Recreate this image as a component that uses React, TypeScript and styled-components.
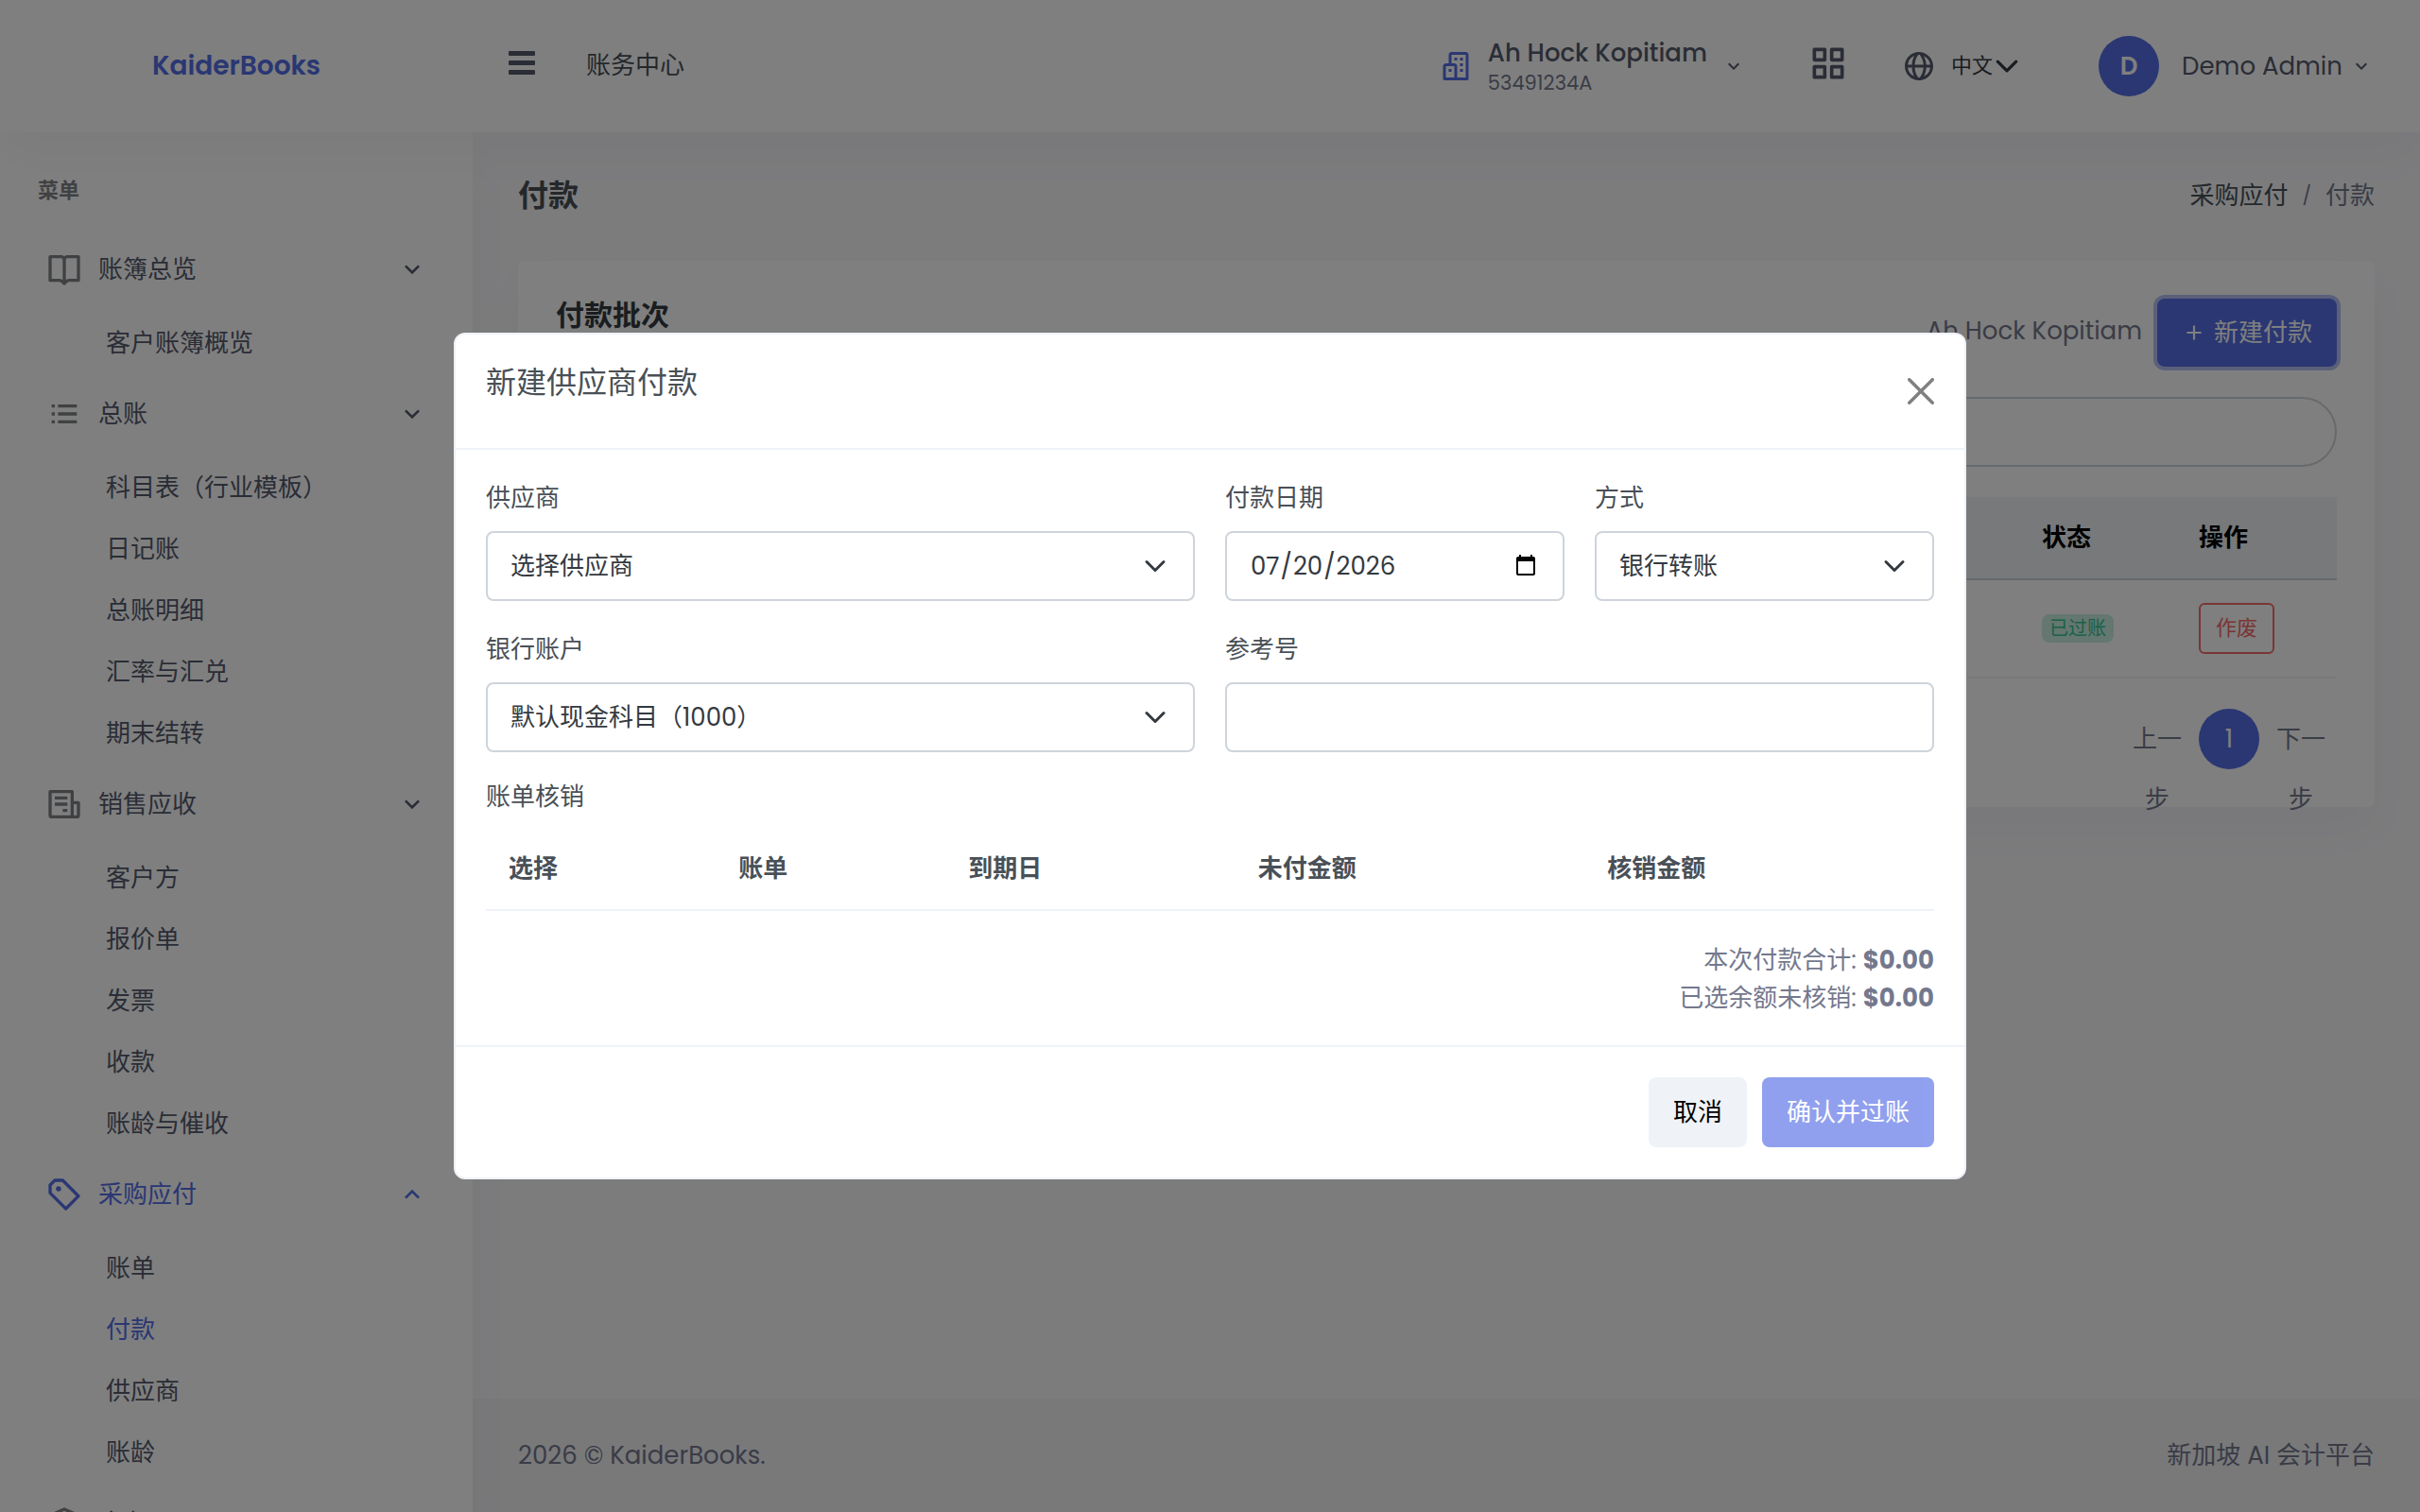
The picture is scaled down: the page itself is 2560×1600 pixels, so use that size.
import React from "react";
import styled, { createGlobalStyle, css } from "styled-components";
import {
  BiBookOpen,
  BiBuildings,
  BiCube,
  BiGlobe,
  BiGridAlt,
  BiListUl,
  BiPlus,
  BiPurchaseTagAlt,
} from "react-icons/bi";

const color = {
  primary: "#556ee6",
  text: "#495057",
  ink: "#343a40",
  nav: "#545a6d",
  heading: "#555b6d",
  muted: "#74788d",
  border: "#eff2f7",
  inputBorder: "#ced4da",
  body: "#f8f8fb",
};

const shadow = "0 24px 48px rgba(18, 38, 63, 0.03)";

const GlobalStyle = createGlobalStyle`
  *, *::before, *::after { box-sizing: border-box; }
  body {
    margin: 0;
    background: ${color.body};
    color: ${color.text};
    font-family: Poppins, Inter, "Noto Sans CJK SC", sans-serif;
    font-size: 26px;
    line-height: 38px;
  }
  h1, h2, ul, ol, p { margin: 0; padding: 0; }
  ul, ol { list-style: none; }
  a { color: inherit; text-decoration: none; }
  button, input, select { font: inherit; color: inherit; margin: 0; }
  svg { display: block; flex: none; }
`;

/* ---------- shell ---------- */

const Shell = styled.div`
  display: flex;
  flex-direction: column;
  height: 100vh;
  overflow: hidden;
`;

const TopBar = styled.header`
  position: relative;
  z-index: 3;
  display: flex;
  align-items: center;
  flex: none;
  height: 140px;
  padding-right: 50px;
  background: #fff;
  box-shadow: ${shadow};
  color: ${color.heading};
`;

const Brand = styled.a`
  width: 500px;
  flex: none;
  text-align: center;
  color: ${color.primary};
  font-size: 28px;
  font-weight: 600;
`;

const PlainButton = styled.button`
  display: flex;
  align-items: center;
  padding: 0;
  border: 0;
  background: none;
`;

const IconButton = styled(PlainButton)`
  padding-bottom: 6px;
`;

const MenuToggle = styled(IconButton)`
  margin: 0 54px 0 38px;
`;

const Section = styled.span`
  flex: 1;
  padding-bottom: 2px;
  color: ${color.text};
`;

const Company = styled(PlainButton)`
  gap: 16px;
  margin-right: 66px;
  text-align: left;
`;

const CompanyText = styled.span`
  display: flex;
  flex-direction: column;
  min-width: 232px;
`;

const CompanyName = styled.span`
  font-weight: 500;
  line-height: 36px;
`;

const CompanyId = styled.span`
  font-size: 21px;
  line-height: 28px;
  color: ${color.muted};
`;

const Language = styled.div`
  display: flex;
  align-items: center;
  gap: 16px;
  margin: 0 84px 0 56px;
`;

const Avatar = styled.span`
  display: flex;
  align-items: center;
  justify-content: center;
  width: 64px;
  height: 64px;
  margin-right: 24px;
  border-radius: 50%;
  background: ${color.primary};
  color: #fff;
  font-weight: 600;
`;

const UserName = styled.span`
  min-width: 170px;
  margin-right: 8px;
  white-space: nowrap;
`;

const Body = styled.div`
  display: flex;
  flex: 1;
  min-height: 0;
`;

/* ---------- sidebar ---------- */

const Sidebar = styled.nav`
  position: relative;
  z-index: 2;
  flex: none;
  width: 500px;
  padding-top: 42px;
  overflow: hidden;
  background: #fff;
  box-shadow: ${shadow};
  color: ${color.nav};
`;

const MenuTitle = styled.p`
  padding-left: 40px;
  margin-bottom: 20px;
  font-size: 22px;
  font-weight: 600;
  line-height: 40px;
  color: #7f8387;
`;

const GroupLink = styled.a<{ $active?: boolean }>`
  display: flex;
  align-items: center;
  gap: 16px;
  height: 86px;
  padding: 0 48px;
  color: ${(p) => (p.$active ? color.primary : color.nav)};

  > svg:first-child {
    color: ${(p) => (p.$active ? color.primary : "#7f8387")};
  }
`;

const GroupLabel = styled.span`
  flex: 1;
`;

const SubMenu = styled.ul`
  margin-top: 2px;
`;

const SubLink = styled.a<{ $active?: boolean }>`
  display: flex;
  align-items: center;
  height: 65px;
  padding-left: 112px;
  color: ${(p) => (p.$active ? color.primary : color.nav)};
`;

/* ---------- page ---------- */

const Page = styled.div`
  display: flex;
  flex: 1;
  flex-direction: column;
  min-width: 0;
`;

const Main = styled.main`
  flex: 1;
  padding: 48px 48px 0;
`;

const TitleRow = styled.div`
  display: flex;
  align-items: center;
  justify-content: space-between;
  margin-bottom: 50px;
`;

const PageTitle = styled.h1`
  font-size: 32px;
  font-weight: 600;
  line-height: 38px;
`;

const Crumbs = styled.ol`
  display: flex;
  gap: 15px;
  color: ${color.muted};

  li:first-child { color: ${color.text}; }
`;

const Slash = styled.li`
  font-size: 20px;
`;

const Card = styled.section`
  padding: 40px;
  border-radius: 8px;
  background: #fff;
  box-shadow: ${shadow};
`;

const CardHead = styled.div`
  display: flex;
  align-items: flex-start;
  justify-content: space-between;
  margin-bottom: 32px;
`;

const CardTitle = styled.h2`
  font-size: 30px;
  font-weight: 600;
  line-height: 36px;
  color: ${color.ink};
`;

const CardActions = styled.div`
  display: flex;
  align-items: center;
  gap: 16px;
  color: ${color.muted};
`;

const CompanyLabel = styled.span`
  padding-bottom: 4px;
`;

const Button = styled.button<{ $kind: "primary" | "light" }>`
  display: flex;
  align-items: center;
  gap: 8px;
  height: 74px;
  padding: 0 26px;
  border: 0;
  border-radius: 8px;
  font-size: 26px;
  ${(p) =>
    p.$kind === "primary"
      ? css`background: ${color.primary}; color: #fff;`
      : css`background: ${color.border}; color: #000;`}

  &:disabled { opacity: 0.65; }
`;

const NewButton = styled(Button)`
  height: 72px;
  box-shadow: 0 0 0 4px rgba(111, 132, 234, 0.5);
`;

const SearchBox = styled.input`
  display: block;
  width: 100%;
  height: 74px;
  margin-bottom: 32px;
  padding: 0 32px;
  border: 2px solid ${color.inputBorder};
  border-radius: 37px;
  background: #fff;
`;

const Table = styled.table`
  width: 100%;
  border-collapse: separate;
  border-spacing: 0;
  text-align: left;

  th, td {
    padding: 24px;
    border-bottom: 2px solid ${color.border};
  }
  th {
    font-weight: 600;
    white-space: nowrap;
  }
`;

const BatchTable = styled(Table)`
  table-layout: fixed;

  th {
    background: ${color.border};
    border-color: ${color.inputBorder};
    color: #000;
  }
`;

const StatusCol = styled.col`
  width: 166px;
`;

const ActionCol = styled.col`
  width: 170px;
`;

const Badge = styled.span`
  display: block;
  width: max-content;
  padding: 0 8px;
  border-radius: 8px;
  background: #c9efe1;
  color: #34c38f;
  font-size: 20px;
  line-height: 30px;
`;

const VoidButton = styled.button`
  display: block;
  height: 54px;
  padding: 0 16px;
  border: 2px solid #f46a6a;
  border-radius: 6px;
  background: none;
  color: #f46a6a;
  font-size: 22px;
`;

const Pager = styled.ul`
  display: flex;
  justify-content: flex-end;
  gap: 12px;
  height: 64px;
  margin-top: 32px;
  padding-right: 6px;
  color: ${color.muted};
`;

const PageLink = styled.a<{ $active?: boolean }>`
  display: block;
  width: 64px;
  height: 64px;
  line-height: 64px;
  text-align: center;
  ${(p) =>
    p.$active &&
    css`border-radius: 50%; background: ${color.primary}; color: #fff;`}
`;

const Footer = styled.footer`
  display: flex;
  align-items: center;
  justify-content: space-between;
  height: 120px;
  padding: 0 48px;
  background: #f2f2f5;
  color: ${color.muted};
`;

/* ---------- dialog ---------- */

const Backdrop = styled.div`
  position: fixed;
  inset: 0;
  z-index: 10;
  display: flex;
  align-items: center;
  justify-content: center;
  background: rgba(0, 0, 0, 0.5);
`;

const Dialog = styled.div`
  width: 100%;
  max-width: 1600px;
  border: 2px solid ${color.border};
  border-radius: 12px;
  background: #fff;
`;

const DialogHead = styled.div`
  display: flex;
  align-items: flex-start;
  justify-content: space-between;
  padding: 32px;
  border-bottom: 2px solid ${color.border};
`;

const DialogTitle = styled.h2`
  font-size: 32px;
  font-weight: 400;
  line-height: 38px;
`;

const CloseButton = styled(PlainButton)`
  height: 56px;
  color: #808080;
`;

const DialogBody = styled.div`
  padding: 32px 32px 30px;
`;

const Fields = styled.div`
  display: grid;
  grid-template-columns: repeat(4, 1fr);
  gap: 32px;
  margin-bottom: 28px;
`;

const Field = styled.div<{ $span?: number }>`
  display: flex;
  flex-direction: column;
  gap: 16px;
  grid-column: span ${(p) => p.$span ?? 1};
`;

const control = css`
  width: 100%;
  height: 74px;
  padding: 0 24px;
  border: 2px solid ${color.inputBorder};
  border-radius: 8px;
  background: #fff;
  color: ${color.ink};
`;

const TextInput = styled.input`
  ${control}
`;

const SelectWrap = styled.div`
  display: grid;
  align-items: center;

  > * { grid-area: 1 / 1; }
  > svg {
    justify-self: end;
    margin-right: 30px;
    color: ${color.ink};
    pointer-events: none;
  }
`;

const Select = styled.select`
  ${control}
  appearance: none;
`;

const LanguageWrap = styled(SelectWrap)`
  width: 72px;

  > svg { margin-right: 0; }
`;

const LanguageSelect = styled.select`
  width: 100%;
  padding: 0;
  border: 0;
  background: none;
  appearance: none;
  font-size: 22px;
  color: ${color.ink};
`;

const TableLabel = styled.p`
  margin-bottom: 14px;
`;

const Totals = styled.div`
  margin-top: 32px;
  text-align: right;
  line-height: 40px;
  color: ${color.muted};
`;

const DialogFoot = styled.div`
  display: flex;
  justify-content: flex-end;
  gap: 16px;
  padding: 32px;
  border-top: 2px solid ${color.border};
`;

/* ---------- small drawings ---------- */

const Chevron = ({ size = 24, up = false }: { size?: number; up?: boolean }) => (
  <svg width={size} height={size} viewBox="0 0 24 24" fill="currentColor" aria-hidden="true">
    <path
      d={
        up
          ? "M7.41 15.41 12 10.83l4.59 4.58L18 14l-6-6-6 6z"
          : "M7.41 8.58 12 13.17l4.59-4.59L18 10l-6 6-6-6z"
      }
    />
  </svg>
);

const Caret = ({ size = 24 }: { size?: number }) => (
  <svg width={size} height={size} viewBox="0 0 16 16" fill="none" stroke="currentColor" strokeWidth="2" strokeLinecap="round" strokeLinejoin="round" aria-hidden="true">
    <path d="m2 5 6 6 6-6" />
  </svg>
);

const Bars = () => (
  <svg width="28" height="26" viewBox="0 0 28 26" fill="currentColor" aria-hidden="true">
    <rect width="28" height="5" rx="1" />
    <rect y="10" width="28" height="5" rx="1" />
    <rect y="20" width="28" height="5" rx="1" />
  </svg>
);

const Newspaper = ({ size = 24 }: { size?: number }) => (
  <svg width={size} height={size} viewBox="0 0 24 24" fill="none" stroke="currentColor" strokeWidth="2" strokeLinejoin="round" aria-hidden="true">
    <path d="M17 20V4H3v15a1 1 0 0 0 1 1h16a1 1 0 0 0 1-1v-8h-4" />
    <path d="M6 8h8M6 12h8M11 16h3" />
  </svg>
);

const Cross = () => (
  <svg width="28" height="28" viewBox="0 0 16 16" fill="currentColor" aria-hidden="true">
    <path d="M.293.293a1 1 0 0 1 1.414 0L8 6.586 14.293.293a1 1 0 1 1 1.414 1.414L9.414 8l6.293 6.293a1 1 0 0 1-1.414 1.414L8 9.414l-6.293 6.293a1 1 0 0 1-1.414-1.414L6.586 8 .293 1.707a1 1 0 0 1 0-1.414z" />
  </svg>
);

/* ---------- data ---------- */

const menu = [
  { label: "账簿总览", icon: BiBookOpen, items: ["客户账簿概览"] },
  {
    label: "总账",
    icon: BiListUl,
    items: ["科目表（行业模板）", "日记账", "总账明细", "汇率与汇兑", "期末结转"],
  },
  {
    label: "销售应收",
    icon: Newspaper,
    items: ["客户方", "报价单", "发票", "收款", "账龄与催收"],
  },
  {
    label: "采购应付",
    icon: BiPurchaseTagAlt,
    active: "付款",
    items: ["账单", "付款", "供应商", "账龄"],
  },
  { label: "库存", icon: BiCube, items: [] },
];

const billColumns = ["选择", "账单", "到期日", "未付金额", "核销金额"];

const SelectField = ({ id, label, value, span }: { id: string; label: string; value: string; span?: number }) => (
  <Field $span={span}>
    <label htmlFor={id}>{label}</label>
    <SelectWrap>
      <Select id={id}>
        <option>{value}</option>
      </Select>
      <Caret />
    </SelectWrap>
  </Field>
);

export default function App() {
  return (
    <>
      <GlobalStyle />
      <Shell>
        <TopBar>
          <Brand href="#">KaiderBooks</Brand>
          <MenuToggle aria-label="菜单">
            <Bars />
          </MenuToggle>
          <Section>账务中心</Section>
          <Company>
            <BiBuildings size={36} color={color.primary} />
            <CompanyText>
              <CompanyName>Ah Hock Kopitiam</CompanyName>
              <CompanyId>53491234A</CompanyId>
            </CompanyText>
            <Chevron />
          </Company>
          <IconButton aria-label="应用">
            <BiGridAlt size={44} />
          </IconButton>
          <Language>
            <BiGlobe size={36} />
            <LanguageWrap>
              <LanguageSelect aria-label="语言">
                <option>中文</option>
              </LanguageSelect>
              <Caret size={26} />
            </LanguageWrap>
          </Language>
          <PlainButton>
            <Avatar>D</Avatar>
            <UserName>Demo Admin</UserName>
            <Chevron />
          </PlainButton>
        </TopBar>

        <Body>
          <Sidebar>
            <MenuTitle>菜单</MenuTitle>
            <ul>
              {menu.map(({ label, icon: Icon, active, items }) => (
                <li key={label}>
                  <GroupLink href="#" $active={!!active}>
                    <Icon size={40} />
                    <GroupLabel>{label}</GroupLabel>
                    <Chevron size={32} up={!!active} />
                  </GroupLink>
                  <SubMenu>
                    {items.map((item) => (
                      <li key={item}>
                        <SubLink href="#" $active={item === active}>
                          {item}
                        </SubLink>
                      </li>
                    ))}
                  </SubMenu>
                </li>
              ))}
            </ul>
          </Sidebar>

          <Page>
            <Main>
              <TitleRow>
                <PageTitle>付款</PageTitle>
                <Crumbs>
                  <li>
                    <a href="#">采购应付</a>
                  </li>
                  <Slash aria-hidden="true">/</Slash>
                  <li>付款</li>
                </Crumbs>
              </TitleRow>
              <Card>
                <CardHead>
                  <CardTitle>付款批次</CardTitle>
                  <CardActions>
                    <CompanyLabel>Ah Hock Kopitiam</CompanyLabel>
                    <NewButton $kind="primary">
                      <BiPlus size={26} />
                      新建付款
                    </NewButton>
                  </CardActions>
                </CardHead>
                <SearchBox type="search" aria-label="搜索" />
                <BatchTable>
                  <colgroup>
                    <col />
                    <StatusCol />
                    <ActionCol />
                  </colgroup>
                  <thead>
                    <tr>
                      <th aria-label="批次" />
                      <th>状态</th>
                      <th>操作</th>
                    </tr>
                  </thead>
                  <tbody>
                    <tr>
                      <td />
                      <td>
                        <Badge>已过账</Badge>
                      </td>
                      <td>
                        <VoidButton>作废</VoidButton>
                      </td>
                    </tr>
                  </tbody>
                </BatchTable>
                <Pager>
                  <li>
                    <PageLink href="#">上一步</PageLink>
                  </li>
                  <li>
                    <PageLink href="#" $active>
                      1
                    </PageLink>
                  </li>
                  <li>
                    <PageLink href="#">下一步</PageLink>
                  </li>
                </Pager>
              </Card>
            </Main>
            <Footer>
              <span>2026 © KaiderBooks.</span>
              <span>新加坡 AI 会计平台</span>
            </Footer>
          </Page>
        </Body>
      </Shell>

      <Backdrop>
        <Dialog role="dialog" aria-modal="true" aria-labelledby="dialog-title">
          <DialogHead>
            <DialogTitle id="dialog-title">新建供应商付款</DialogTitle>
            <CloseButton aria-label="关闭">
              <Cross />
            </CloseButton>
          </DialogHead>
          <DialogBody>
            <Fields>
              <SelectField id="supplier" label="供应商" value="选择供应商" span={2} />
              <Field>
                <label htmlFor="date">付款日期</label>
                <TextInput id="date" type="date" defaultValue="2026-07-20" />
              </Field>
              <SelectField id="method" label="方式" value="银行转账" />
              <SelectField id="bank" label="银行账户" value="默认现金科目（1000）" span={2} />
              <Field $span={2}>
                <label htmlFor="reference">参考号</label>
                <TextInput id="reference" type="text" />
              </Field>
            </Fields>
            <TableLabel>账单核销</TableLabel>
            <Table>
              <thead>
                <tr>
                  {billColumns.map((c) => (
                    <th key={c}>{c}</th>
                  ))}
                </tr>
              </thead>
            </Table>
            <Totals>
              <p>
                本次付款合计: <strong>$0.00</strong>
              </p>
              <p>
                已选余额未核销: <strong>$0.00</strong>
              </p>
            </Totals>
          </DialogBody>
          <DialogFoot>
            <Button $kind="light">取消</Button>
            <Button $kind="primary" disabled>
              确认并过账
            </Button>
          </DialogFoot>
        </Dialog>
      </Backdrop>
    </>
  );
}
